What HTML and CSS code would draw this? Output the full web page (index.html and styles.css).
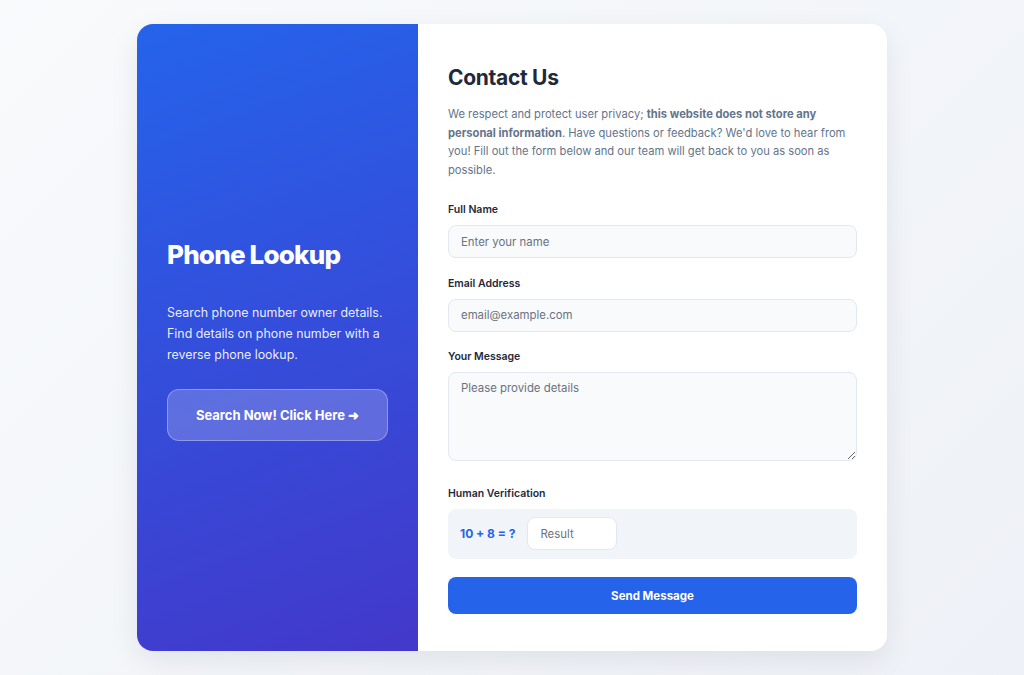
FILE: index.html
```html
<!DOCTYPE html>
<html lang="en">
<head>
    <meta charset="UTF-8">
    <meta name="viewport" content="width=device-width, initial-scale=1.0">
    <title>Contact Us - Phone Lookup</title>
    <link rel="stylesheet" href="styles.css">
</head>
<body>
    <div class="contact-card">
        <!-- Left promo panel -->
        <div class="promo">
            <h1>Phone Lookup</h1>
            <p>Search phone number owner details. Find details on phone number with a reverse phone lookup.</p>
            <a class="promo-button" href="#">Search Now! Click Here &#10140;</a>
        </div>

        <!-- Contact form -->
        <div class="form-side">
            <h2>Contact Us</h2>
            <p class="intro">We respect and protect user privacy; <strong>this website does not store any personal information</strong>. Have questions or feedback? We'd love to hear from you! Fill out the form below and our team will get back to you as soon as possible.</p>
            <form>
                <div class="form-group">
                    <label for="name">Full Name</label>
                    <input type="text" id="name" placeholder="Enter your name">
                </div>
                <div class="form-group">
                    <label for="email">Email Address</label>
                    <input type="email" id="email" placeholder="email@example.com">
                </div>
                <div class="form-group">
                    <label for="message">Your Message</label>
                    <textarea id="message" placeholder="Please provide details"></textarea>
                </div>
                <div class="form-group">
                    <label for="captcha">Human Verification</label>
                    <div class="captcha">
                        <span class="captcha-question">10 + 8 = ?</span>
                        <input type="text" id="captcha" placeholder="Result">
                    </div>
                </div>
                <button type="submit" class="send-button">Send Message</button>
            </form>
        </div>
    </div>
</body>
</html>
```

FILE: styles.css
```css
body {
    font-family: Inter, "Noto Sans", sans-serif;
    margin: 0;
    padding: 24px 0;
    background: linear-gradient(135deg, #f8fafc, #eef1f7);
    min-height: 100vh;
    box-sizing: border-box;
}
.contact-card {
    width: 750px;
    height: 627px;
    margin: 0 auto;
    display: flex;
    background: #fff;
    border-radius: 16px;
    overflow: hidden;
    box-shadow: 0 10px 30px rgba(15, 23, 42, 0.08);
}
.promo {
    width: 281px;
    flex-shrink: 0;
    box-sizing: border-box;
    padding: 5px 30px 0;
    display: flex;
    flex-direction: column;
    justify-content: center;
    background: linear-gradient(160deg, #2563eb, #4338ca);
    color: #fff;
}
.promo h1 {
    font-size: 26px;
    font-weight: 800;
    letter-spacing: -0.8px;
    margin: 0 0 32px;
}
.promo p {
    font-size: 12.4px;
    line-height: 21px;
    margin: 0 0 24px;
    color: rgba(255, 255, 255, 0.92);
}
.promo-button {
    display: block;
    height: 52px;
    line-height: 50px;
    box-sizing: border-box;
    text-align: center;
    color: #fff;
    font-size: 13px;
    font-weight: 700;
    text-decoration: none;
    background: rgba(255, 255, 255, 0.2);
    border: 1px solid rgba(255, 255, 255, 0.3);
    border-radius: 12px;
}
.form-side {
    flex: 1;
    padding: 41px 30px 0;
}
.form-side h2 {
    font-size: 21px;
    font-weight: 700;
    color: #1e293b;
    margin: 0 0 15px;
    letter-spacing: -0.3px;
}
.intro {
    font-size: 11.2px;
    line-height: 18.5px;
    color: #64748b;
    margin: 0 0 23px;
}
.intro strong {
    font-weight: 700;
}
.form-group {
    margin-bottom: 17.5px;
}
.form-group label {
    display: block;
    font-size: 10.5px;
    line-height: 16px;
    font-weight: 600;
    color: #1e293b;
    margin-bottom: 7px;
}
input,
textarea {
    width: 100%;
    box-sizing: border-box;
    font-family: Inter, "Noto Sans", sans-serif;
    font-size: 11.4px;
    color: #1e293b;
    background: #f8fafc;
    border: 1px solid #e2e8f0;
    border-radius: 8px;
    padding: 0 12px;
    outline: none;
}
input {
    height: 33px;
}
textarea {
    height: 89px;
    padding: 8px 12px;
    vertical-align: top;
    margin-bottom: 7px;
}
::placeholder {
    color: #6b7280;
}
.captcha {
    display: flex;
    align-items: center;
    gap: 12px;
    height: 50px;
    padding: 0 12px;
    background: #f1f5f9;
    border-radius: 8px;
}
.captcha-question {
    font-size: 12px;
    font-weight: 700;
    color: #2563eb;
}
.captcha input {
    width: 90px;
    background: #fff;
}
.send-button {
    display: block;
    width: 100%;
    height: 37px;
    margin-top: 18.5px;
    border: none;
    border-radius: 8px;
    background: #2563eb;
    color: #fff;
    font-family: Inter, "Noto Sans", sans-serif;
    font-size: 11.5px;
    font-weight: 700;
    cursor: pointer;
}
.form-group:last-of-type {
    margin-bottom: 0;
}
```
